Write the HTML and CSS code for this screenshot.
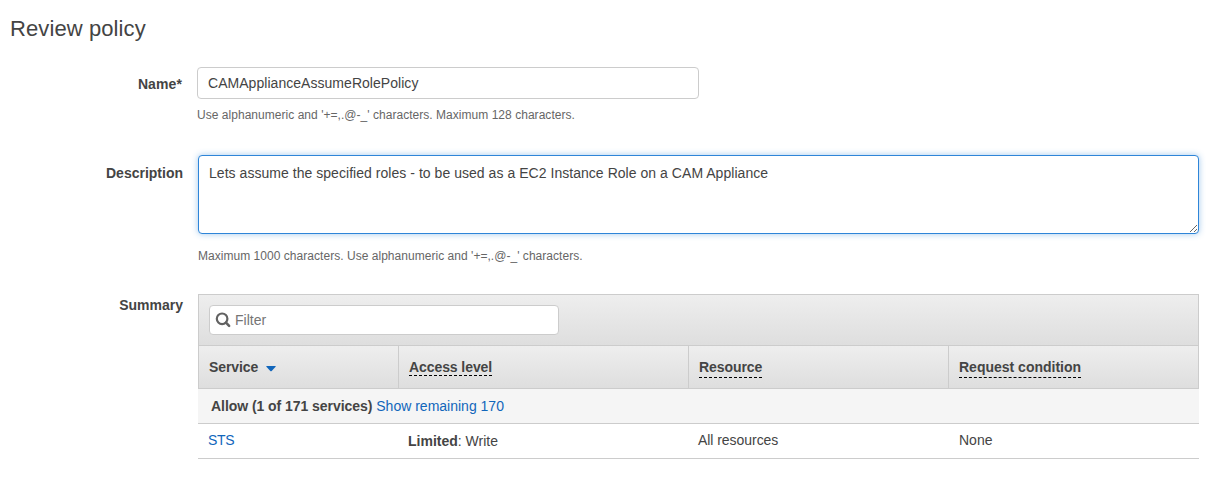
FILE: index.html
```html
<!DOCTYPE html>
<html lang="en">
<head>
<meta charset="utf-8">
<title>Review policy</title>
<link rel="stylesheet" href="styles.css">
</head>
<body>
<main class="page">
  <h1 class="title">Review policy</h1>

  <div class="field field-name">
    <label class="label label-name" for="name">Name*</label>
    <div class="control">
      <input class="input" id="name" type="text" value="CAMApplianceAssumeRolePolicy" spellcheck="false">
      <p class="hint hint-name">Use alphanumeric and '+=,.@-_' characters. Maximum 128 characters.</p>
    </div>
  </div>

  <div class="field field-description">
    <label class="label" for="description">Description</label>
    <div class="control">
      <textarea class="textarea" id="description" spellcheck="false">Lets assume the specified roles - to be used as a EC2 Instance Role on a CAM Appliance</textarea>
      <p class="hint hint-description">Maximum 1000 characters. Use alphanumeric and '+=,.@-_' characters.</p>
    </div>
  </div>

  <div class="field field-summary">
    <div class="label">Summary</div>
    <div class="summary">
      <div class="toolbar">
        <div class="filter">
          <svg class="search-icon" width="16" height="16" viewBox="0 0 16 16" fill="none" stroke="#626262">
            <circle cx="7.1" cy="6.8" r="5.3" stroke-width="2.2"/>
            <path d="M11 10.7L14.1 13.8" stroke-width="2.6" stroke-linecap="round"/>
          </svg>
          <span class="placeholder">Filter</span>
        </div>
      </div>
      <div class="row header">
        <div class="cell cell-service">Service<svg class="sort-icon" width="10" height="6" viewBox="0 0 10 6"><path d="M.6 0h8.8q.5.2.2.7L5.7 4.9q-.7.6-1.4 0L.4.7Q.1.2.6 0z" fill="#1166bb"/></svg></div>
        <div class="cell"><span class="term term-tight">Access level</span></div>
        <div class="cell"><span class="term">Resource</span></div>
        <div class="cell"><span class="term term-wide">Request condition</span></div>
      </div>
      <div class="group"><b class="group-name">Allow (1 of 171 services)</b> <a class="link">Show remaining 170</a></div>
      <div class="row data">
        <div class="cell"><a class="link link-service">STS</a></div>
        <div class="cell cell-level"><b>Limited</b>: Write</div>
        <div class="cell cell-resource">All resources</div>
        <div class="cell cell-condition">None</div>
      </div>
    </div>
  </div>
</main>
</body>
</html>
```

FILE: styles.css
```css
* { box-sizing: border-box; }

body {
  margin: 0;
  background: #fff;
  color: #444;
  font: 14px/20px "Liberation Sans", Arial, sans-serif;
}

.page { width: 1226px; padding: 15px 27px 0 10px; }

.title {
  margin: 0 0 24px;
  font-size: 22px;
  line-height: 28px;
  font-weight: 400;
  letter-spacing: 0.1px;
}

.field { display: flex; gap: 15px; }
.field-name { height: 88px; }
.field-description { height: 139px; }

.label {
  width: 173px;
  flex: none;
  padding-top: 8px;
  text-align: right;
  font-weight: 700;
}
.label-name { width: 172px; padding-top: 7px; letter-spacing: 0.1px; }
.field-summary .label { padding-top: 1px; }

.control { flex: 1; }

.input, .textarea {
  display: block;
  margin: 0;
  border: 1px solid #ccc;
  border-radius: 4px;
  background: #fff;
  color: #444;
  font: inherit;
  letter-spacing: 0.04px;
  outline: none;
}
.input { width: 502px; height: 32px; padding: 0 10px; }
.textarea {
  width: 1001px;
  height: 79px;
  padding: 7px 10px;
  border-color: #2e85d8;
  box-shadow: 0 0 6px rgba(46, 133, 216, 0.45);
}

.hint {
  margin: 0;
  color: #666;
  font-size: 12px;
  line-height: 16px;
  letter-spacing: 0.035px;
}
.hint-name { margin-top: 8px; }
.hint-description { margin-top: 14px; }

.summary { width: 1001px; }

.toolbar {
  display: flex;
  align-items: flex-start;
  height: 51px;
  padding: 10px;
  border: 1px solid #ccc;
  border-bottom: 0;
  background: linear-gradient(#eee, #dedede);
}
.filter {
  display: flex;
  align-items: center;
  gap: 4px;
  width: 350px;
  height: 30px;
  padding-left: 5px;
  border: 1px solid #ccc;
  border-radius: 4px;
  background: #fff;
}
.placeholder { color: #757575; }

.row { display: grid; grid-template-columns: 200px 290px 260px 1fr; }
.cell { padding-left: 10px; }

.header {
  grid-template-columns: 199px 290px 260px 1fr;
  height: 44px;
  border: 1px solid #ccc;
  background: linear-gradient(#eee, #dedede);
  font-weight: 700;
  letter-spacing: -0.08px;
}
.header .cell { padding-top: 11px; border-left: 1px solid #ccc; }
.header .cell:first-child { border-left: 0; }
.sort-icon { margin-left: 8px; vertical-align: 0; }

.term {
  display: inline-block;
  height: 21px;
  border-bottom: 1px dashed #000;
}
.term-tight { height: 19px; }
.term-wide { letter-spacing: 0; }

.group {
  height: 35px;
  padding: 7px 13px;
  border-bottom: 1px solid #ccc;
  background: #f5f5f5;
}
.group-name { letter-spacing: -0.05px; }

.data { height: 35px; border-bottom: 1px solid #ccc; padding-top: 6px; }
.cell-level { padding-top: 1px; }
.cell-resource { letter-spacing: -0.05px; }
.cell-condition { padding-left: 11px; }
.link { color: #1166bb; }
.link-service { letter-spacing: -0.3px; }
```
